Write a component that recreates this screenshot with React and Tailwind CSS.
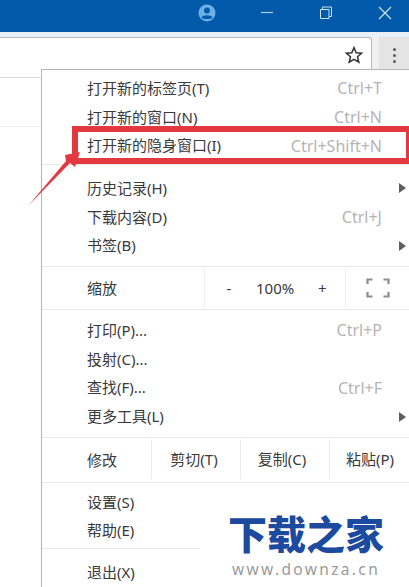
const font = { fontFamily: '"Noto Sans", "Noto Sans CJK SC", sans-serif' };

function Row({ label, hint, arrow }) {
  return (
    <div className="flex h-[28.7px] items-center justify-between pl-[45px]">
      <span className="text-[15px] leading-none text-[#3a3a3a]">{label}</span>
      {hint && <span className="mr-[27px] text-[16px] leading-none text-[#b4b4b4]">{hint}</span>}
      {arrow && (
        <svg width="7" height="10" viewBox="0 0 7 10" className="mr-[3px]">
          <path d="M0 0 L7 5 L0 10 Z" fill="#5f5f5f" />
        </svg>
      )}
    </div>
  );
}

function Sep() {
  return <div className="h-px bg-[#e9e9e9]" />;
}

export default function App() {
  return (
    <div className="relative h-[587px] w-[409px] overflow-hidden bg-white" style={font}>
      {/* title bar */}
      <div className="flex h-[32px] items-center justify-end bg-[#005aa9]">
        <svg width="18" height="18" viewBox="0 0 18 18" className="mr-[44px] mb-[7px]">
          <circle cx="9" cy="9" r="8.5" fill="#6db0e6" />
          <circle cx="9" cy="6.5" r="3" fill="#005aa9" />
          <path d="M3.5 13.5 C5 10.5 13 10.5 14.5 13.5 C13 15.5 5 15.5 3.5 13.5 Z" fill="#005aa9" />
        </svg>
        <svg width="14" height="14" viewBox="0 0 14 14" className="mr-[45px] mb-[8px]">
          <path d="M1 7.5 H13" stroke="#a9d0ef" strokeWidth="1.2" />
        </svg>
        <svg width="14" height="14" viewBox="0 0 14 14" className="mr-[45px] mb-[6px]">
          <path d="M1.5 3.5 H10 V12.5 H1.5 Z M3.5 3.5 V1 H12.5 V10.5 H10" fill="none" stroke="#cfe3f4" strokeWidth="1" />
        </svg>
        <svg width="14" height="14" viewBox="0 0 14 14" className="mr-[17px] mb-[6px]">
          <path d="M1 1 L13 13 M13 1 L1 13" stroke="#d5e7f6" strokeWidth="1.1" />
        </svg>
      </div>
      {/* strip + toolbar */}
      <div className="h-[5px] bg-[#e6f1f9]" />
      <div className="flex h-[33px] items-stretch bg-[#f0f0f0]">
        <div className="flex w-[372px] items-center justify-end rounded-tr-[3px] border-t border-r border-[#b9b9b9] bg-white pr-[8px]">
          <svg width="18" height="18" viewBox="0 0 18 18" className="mt-[1px]">
            <path d="M9 1.6 L11.2 6.7 L16.6 7.2 L12.5 10.8 L13.8 16.2 L9 13.4 L4.2 16.2 L5.5 10.8 L1.4 7.2 L6.8 6.7 Z" fill="none" stroke="#333" strokeWidth="1.5" />
          </svg>
        </div>
        <div className="ml-[7px] flex w-[30px] flex-col items-center justify-center gap-[3px] bg-[#e4e4e4] pt-[4px]">
          <span className="size-[3px] rounded-full bg-[#5a5a5a]" />
          <span className="size-[3px] rounded-full bg-[#5a5a5a]" />
          <span className="size-[3px] rounded-full bg-[#5a5a5a]" />
        </div>
      </div>
      {/* page behind the menu */}
      <div className="h-[8px] border-b border-[#dcdcdc]" />
      <div className="h-[49px] w-[41px] border-b border-[#eeeeee]" />

      {/* menu */}
      <div className="absolute top-[69px] left-[41px] h-[530px] w-[368px] border-t border-l border-[#b5b5b5] bg-white">
        <div className="pt-[4px] pb-[4px]">
          <Row label="打开新的标签页(T)" hint="Ctrl+T" />
          <Row label="打开新的窗口(N)" hint="Ctrl+N" />
          <Row label="打开新的隐身窗口(I)" hint="Ctrl+Shift+N" />
        </div>
        <Sep />
        <div className="pt-[9px] pb-[6px]">
          <Row label="历史记录(H)" arrow />
          <Row label="下载内容(D)" hint="Ctrl+J" />
          <Row label="书签(B)" arrow />
        </div>
        <Sep />
        <div className="flex h-[42px] items-stretch">
          <div className="flex w-[162px] items-center pl-[45px] text-[15px] text-[#3a3a3a]">缩放</div>
          <div className="my-[1px] flex w-[142px] items-center border-x border-[#efefef] text-[#3a3a3a]">
            <span className="ml-[18px] w-[12px] text-center text-[15px]">-</span>
            <span className="ml-[21px] text-[15px]">100%</span>
            <span className="ml-[22px] w-[12px] text-center text-[15px]">+</span>
          </div>
          <div className="flex w-[63px] items-center justify-center">
            <svg width="24" height="20" viewBox="0 0 24 20">
              <path d="M1.5 6 V1.5 H6.5 M17.5 1.5 H22.5 V6 M22.5 14 V18.5 H17.5 M6.5 18.5 H1.5 V14" fill="none" stroke="#8c8c8c" strokeWidth="2.2" />
            </svg>
          </div>
        </div>
        <Sep />
        <div className="pt-[6px] pb-[6px]">
          <Row label="打印(P)..." hint="Ctrl+P" />
          <Row label="投射(C)..." />
          <Row label="查找(F)..." hint="Ctrl+F" />
          <Row label="更多工具(L)" arrow />
        </div>
        <Sep />
        <div className="flex h-[44px] items-stretch text-[15px] text-[#3a3a3a]">
          <div className="flex w-[109px] items-center pl-[45px]">修改</div>
          <div className="mt-[1px] mb-[3px] flex w-[89px] items-center justify-center border-l border-[#ececec] pr-[4px]">剪切(T)</div>
          <div className="mt-[1px] mb-[3px] flex w-[89px] items-center justify-center border-l border-[#ececec] pr-[6px]">复制(C)</div>
          <div className="mt-[1px] mb-[3px] flex w-[80px] items-center justify-center border-l border-[#ececec] pl-[1px]">粘贴(P)</div>
        </div>
        <Sep />
        <div className="pt-[5px] pb-[3px]">
          <Row label="设置(S)" />
          <Row label="帮助(E)" />
        </div>
        <div className="h-px w-[158px] bg-[#e9e9e9]" />
        <div className="pt-[9px]">
          <Row label="退出(X)" />
        </div>
      </div>

      {/* red annotation */}
      <div className="absolute top-[126px] left-[72px] h-[38px] w-[340px] border-[6px] border-[#e2383f]" />
      <svg width="70" height="70" viewBox="0 0 70 70" className="absolute top-[146px] left-[20px]">
        <path d="M8 60 L46 15 L45 9 L60 6 L55 21 L50 17 Z" fill="#e2383f" />
      </svg>

      {/* watermark */}
      <div className="absolute top-[509px] left-[226px] flex w-[160px] flex-col items-center">
        <span className="text-[39px] leading-[50px] font-black whitespace-nowrap text-[#1b4a9e]">下载之家</span>
        <span className="mt-[1px] text-[15.5px] leading-[18px] tracking-[2.35px] whitespace-nowrap text-[#9a9a9a]">www.downza.cn</span>
      </div>
    </div>
  );
}
